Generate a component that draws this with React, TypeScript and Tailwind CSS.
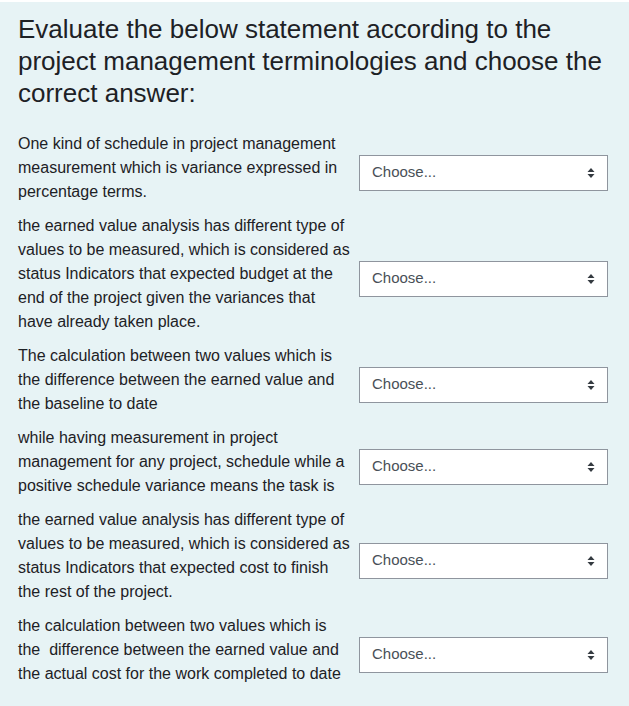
const rows: string[][] = [
  [
    "One kind of schedule in project management",
    "measurement which is variance expressed in",
    "percentage terms.",
  ],
  [
    "the earned value analysis has different type of",
    "values to be measured, which is considered as",
    "status Indicators that expected budget at the",
    "end of the project given the variances that",
    "have already taken place.",
  ],
  [
    "The calculation between two values which is",
    "the difference between the earned value and",
    "the baseline to date",
  ],
  [
    "while having measurement in project",
    "management for any project, schedule while a",
    "positive schedule variance means the task is",
  ],
  [
    "the earned value analysis has different type of",
    "values to be measured, which is considered as",
    "status Indicators that expected cost to finish",
    "the rest of the project.",
  ],
  [
    "the calculation between two values which is",
    "the\u00a0 difference between the earned value and",
    "the actual cost for the work completed to date",
  ],
];

function SortIcon() {
  return (
    <svg width="8" height="12" viewBox="0 0 8 12" className="shrink-0">
      <path d="M4 1 L7.5 5 H0.5 Z" fill="#343a40" />
      <path d="M4 11 L7.5 7 H0.5 Z" fill="#343a40" />
    </svg>
  );
}

function ChooseSelect() {
  return (
    <div className="mt-[9px] flex h-[36px] w-[249px] shrink-0 items-center justify-between border border-[#8f959e] bg-white pl-[12px] pr-[12px] text-[15px] text-[#495057]">
      <span>Choose...</span>
      <SortIcon />
    </div>
  );
}

export default function App() {
  return (
    <div
      className="min-h-[706px] w-[629px] border-t-2 border-white bg-[#e7f3f5] text-[#1d2125]"
      style={{ fontFamily: '"Liberation Sans", Arial, sans-serif' }}
    >
      <div className="pl-[18px] pt-[11px]">
        <h2 className="text-[26px] leading-[32px] font-normal">
          Evaluate the below statement according to the
          <br />
          project management terminologies and choose the
          <br />
          correct answer:
        </h2>
        <div className="mt-[23px] flex flex-col gap-[10px]">
          {rows.map((lines, i) => (
            <div key={i} className="flex items-center">
              <p className="w-[341px] shrink-0 text-[16px] leading-[24px]">
                {lines.map((line, j) => (
                  <span key={j} className="block whitespace-nowrap">
                    {line}
                  </span>
                ))}
              </p>
              <ChooseSelect />
            </div>
          ))}
        </div>
      </div>
    </div>
  );
}
